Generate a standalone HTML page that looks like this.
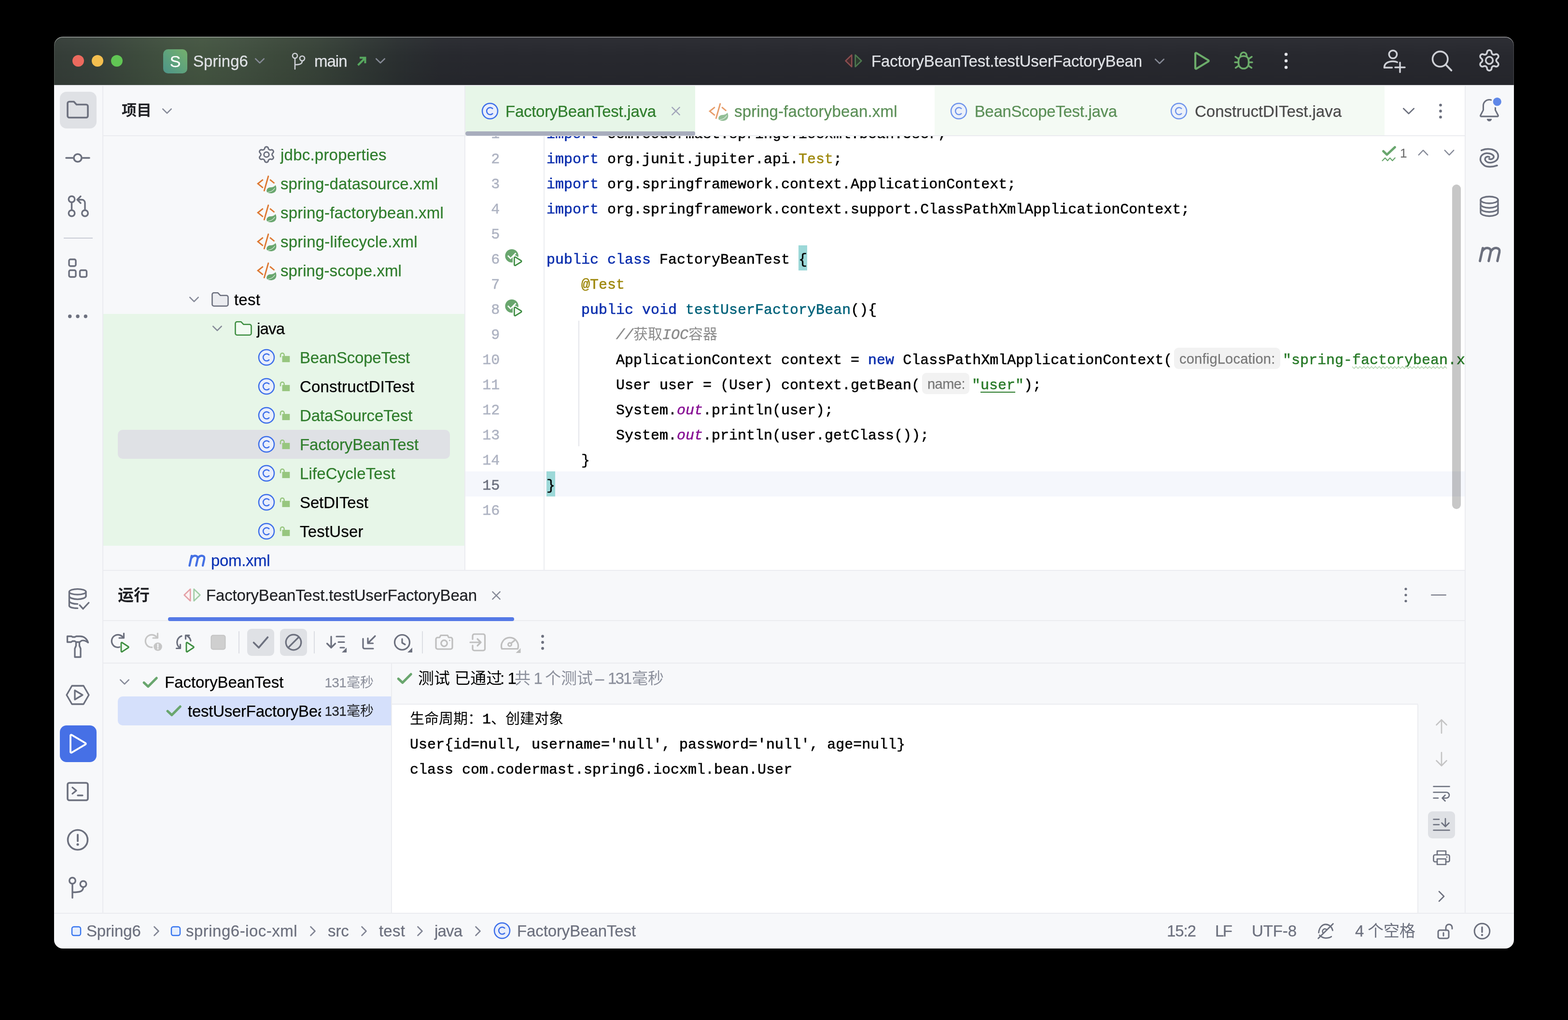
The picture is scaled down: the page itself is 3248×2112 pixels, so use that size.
<!DOCTYPE html>
<html><head><meta charset="utf-8"><title>IDE</title>
<style>
html,body{margin:0;padding:0;background:#000;}
body{width:3248px;height:2112px;position:relative;overflow:hidden;font-family:"Liberation Sans",sans-serif;}
#win{position:absolute;left:0;top:0;width:3248px;height:2112px;clip-path:inset(76px 112px 148px 112px round 18px);background:#F7F8FA;will-change:transform;}
#win div,#win svg{position:absolute;}
#win svg{overflow:visible;}
.t{font-family:"Liberation Sans",sans-serif;white-space:pre;-webkit-text-stroke-width:0.25px;}
.m{font-family:"Liberation Mono",monospace;white-space:pre;-webkit-text-stroke-width:0.55px;}
</style></head><body><div id="win">
<div style="left:112px;top:76px;width:3024px;height:100px;background:#27282E;"></div>
<div style="left:112px;top:76px;width:1000px;height:100px;background:linear-gradient(90deg,#343C37 0%,#37413A 8.4%,#3C4A3C 16.8%,#425240 25.2%,#445541 30.7%,#415040 37.8%,#3C493B 46.2%,#374238 54.6%,#303834 63%,#2A2F30 71.4%,#27292E 79.8%,#27282E 88%,#27282E 100%);"></div>
<div style="left:112px;top:76px;width:3024px;height:100px;background:linear-gradient(180deg,rgba(255,255,255,0.03) 0%,rgba(0,0,0,0) 40%,rgba(0,0,0,0.06) 100%);"></div>
<div style="left:112px;top:76px;width:3024px;height:100px;border-radius:18px 18px 0 0;box-shadow:inset 0 1.6px 0 rgba(255,255,255,0.5), inset 1.2px 0 0 rgba(255,255,255,0.14), inset -1.2px 0 0 rgba(255,255,255,0.14);"></div>
<div style="left:150px;top:114px;width:24px;height:24px;border-radius:12px;background:#EC6A5E;"></div>
<div style="left:190px;top:114px;width:24px;height:24px;border-radius:12px;background:#F4BF4F;"></div>
<div style="left:230px;top:114px;width:24px;height:24px;border-radius:12px;background:#61C554;"></div>
<div style="left:338px;top:102px;width:50px;height:50px;border-radius:10px;background:linear-gradient(45deg,#4E9489 0%,#5FA37C 50%,#76B06C 100%);"></div>
<div class="t" style="left:338px;top:97.0px;height:60px;line-height:60px;font-size:34px;color:#FFFFFF;width:50px;text-align:center;">S</div>
<div class="t" style="left:400px;top:97.0px;height:60px;line-height:60px;font-size:33px;color:#DFE1E5;letter-spacing:0.036px;">Spring6</div>
<svg style="left:506px;top:94px" width="64" height="64" viewBox="-32 -32 64 64" fill="none" stroke-linecap="round" stroke-linejoin="round"><path d="M-8.75 -4.25 L0 4.25 L8.75 -4.25" stroke="#868A96" stroke-width="2.6"/></svg>
<div class="t" style="left:651px;top:97.0px;height:60px;line-height:60px;font-size:33px;color:#DFE1E5;letter-spacing:-1.007px;">main</div>
<svg style="left:756px;top:94px" width="64" height="64" viewBox="-32 -32 64 64" fill="none" stroke-linecap="round" stroke-linejoin="round"><path d="M-8.75 -4.25 L0 4.25 L8.75 -4.25" stroke="#868A96" stroke-width="2.6"/></svg>
<div class="t" style="left:1805px;top:97.0px;height:60px;line-height:60px;font-size:33px;color:#DFE1E5;letter-spacing:-0.164px;">FactoryBeanTest.testUserFactoryBean</div>
<svg style="left:2370px;top:95px" width="64" height="64" viewBox="-32 -32 64 64" fill="none" stroke-linecap="round" stroke-linejoin="round"><path d="M-8.75 -4.25 L0 4.25 L8.75 -4.25" stroke="#868A96" stroke-width="2.6"/></svg>
<div style="left:112px;top:176px;width:100px;height:1714px;background:#F7F8FA;"></div>
<div style="left:212px;top:178px;width:2px;height:1712px;background:#EBECF0;"></div>
<div style="left:112px;top:176px;width:3024px;height:2px;background:#EBECF0;"></div>
<div style="left:3036px;top:178px;width:100px;height:1712px;background:#F7F8FA;"></div>
<div style="left:3034px;top:178px;width:2px;height:1712px;background:#EBECF0;"></div>
<div style="left:214px;top:178px;width:748px;height:1002px;background:#F7F8FA;"></div>
<div style="left:214px;top:280px;width:748px;height:2px;background:#EBECF0;"></div>
<div style="left:962px;top:178px;width:2px;height:1002px;background:#EBECF0;"></div>
<div style="left:214px;top:650px;width:748px;height:480px;background:#E7F6E8;"></div>
<div style="left:244px;top:890px;width:688px;height:60px;background:#DFE1E5;border-radius:10px;"></div>
<div style="left:964px;top:178px;width:2070px;height:1002px;background:#FFFFFF;"></div>
<div style="left:964px;top:178px;width:476px;height:102px;background:#E7F6E8;"></div>
<div style="left:1936px;top:178px;width:932px;height:102px;background:#F4FAF4;"></div>
<div style="left:964px;top:280px;width:2070px;height:2px;background:#EBECF0;"></div>
<div style="left:966px;top:272px;width:474px;height:9px;background:#A8ADBD;border-radius:4px;"></div>
<div style="left:214px;top:1180px;width:2820px;height:2px;background:#EBECF0;"></div>
<div style="left:214px;top:1182px;width:2820px;height:708px;background:#F7F8FA;"></div>
<div style="left:214px;top:1284px;width:2820px;height:2px;background:#EBECF0;"></div>
<div style="left:348px;top:1278px;width:717px;height:8px;background:#5579E6;border-radius:4px;"></div>
<div style="left:214px;top:1372px;width:2820px;height:2px;background:#EBECF0;"></div>
<div style="left:812px;top:1459px;width:2125px;height:431px;background:#FFFFFF;"></div>
<div style="left:812px;top:1457px;width:2125px;height:2px;background:#EBECF0;"></div>
<div style="left:810px;top:1374px;width:2px;height:516px;background:#EBECF0;"></div>
<div style="left:2936px;top:1459px;width:2px;height:431px;background:#EBECF0;"></div>
<div style="left:244px;top:1442px;width:566px;height:60px;background:#D5E0FB;border-radius:10px 0 0 10px;"></div>
<div style="left:112px;top:1890px;width:3024px;height:74px;background:#F7F8FA;"></div>
<div style="left:112px;top:1890px;width:3024px;height:2px;background:#EBECF0;"></div>
<div style="left:124px;top:190px;width:76px;height:76px;background:#DFE1E5;border-radius:14px;"></div>
<div style="left:124px;top:1502px;width:76px;height:76px;background:#4670E6;border-radius:14px;"></div>
<svg style="left:313.7px;top:197.8px" width="64" height="64" viewBox="-32 -32 64 64" fill="none" stroke-linecap="round" stroke-linejoin="round"><path d="M-8.75 -4.35 L0 4.35 L8.75 -4.35" stroke="#868A98" stroke-width="2.6"/></svg>
<svg style="left:520px;top:288px" width="64" height="64" viewBox="-32 -32 64 64" fill="none" stroke-linecap="round" stroke-linejoin="round"><path d="M11.6 0.0 L11.6 0.6 L11.8 1.2 L12.1 1.9 L12.5 2.6 L13.4 3.6 L14.2 4.6 L14.5 5.5 L14.5 6.4 L14.3 7.3 L13.9 8.0 L13.4 8.7 L12.8 9.3 L12.0 9.7 L11.1 10.0 L9.8 9.8 L8.5 9.5 L7.7 9.5 L7.0 9.6 L6.3 9.8 L5.8 10.0 L5.3 10.4 L4.8 10.8 L4.4 11.4 L3.9 12.1 L3.6 13.4 L3.1 14.6 L2.4 15.3 L1.7 15.7 L0.8 16.0 L0.0 16.1 L-0.8 16.0 L-1.7 15.7 L-2.4 15.3 L-3.1 14.6 L-3.6 13.4 L-3.9 12.1 L-4.4 11.4 L-4.8 10.8 L-5.3 10.4 L-5.8 10.0 L-6.3 9.8 L-7.0 9.6 L-7.7 9.5 L-8.5 9.5 L-9.8 9.8 L-11.1 10.0 L-12.0 9.7 L-12.8 9.3 L-13.4 8.7 L-13.9 8.0 L-14.3 7.3 L-14.5 6.4 L-14.5 5.5 L-14.2 4.6 L-13.4 3.6 L-12.5 2.6 L-12.1 1.9 L-11.8 1.2 L-11.6 0.6 L-11.6 0.0 L-11.6 -0.6 L-11.8 -1.2 L-12.1 -1.9 L-12.5 -2.6 L-13.4 -3.6 L-14.2 -4.6 L-14.5 -5.5 L-14.5 -6.4 L-14.3 -7.3 L-13.9 -8.0 L-13.4 -8.7 L-12.8 -9.3 L-12.0 -9.7 L-11.1 -10.0 L-9.8 -9.8 L-8.5 -9.5 L-7.7 -9.5 L-7.0 -9.6 L-6.3 -9.8 L-5.8 -10.0 L-5.3 -10.4 L-4.8 -10.8 L-4.4 -11.4 L-3.9 -12.1 L-3.6 -13.4 L-3.1 -14.6 L-2.4 -15.3 L-1.7 -15.7 L-0.8 -16.0 L-0.0 -16.1 L0.8 -16.0 L1.7 -15.7 L2.4 -15.3 L3.1 -14.6 L3.6 -13.4 L3.9 -12.1 L4.4 -11.4 L4.8 -10.8 L5.3 -10.4 L5.8 -10.0 L6.3 -9.8 L7.0 -9.6 L7.7 -9.5 L8.5 -9.5 L9.8 -9.8 L11.1 -10.0 L12.0 -9.7 L12.8 -9.3 L13.4 -8.7 L13.9 -8.0 L14.3 -7.3 L14.5 -6.4 L14.5 -5.5 L14.2 -4.6 L13.4 -3.6 L12.5 -2.6 L12.1 -1.9 L11.8 -1.2 L11.6 -0.6 Z" stroke="#6C707E" stroke-width="2.9" stroke-linejoin="round"/><circle cx="0" cy="0" r="5.3" stroke="#6C707E" stroke-width="2.9"/></svg>
<div class="t" style="left:581px;top:290.5px;height:60px;line-height:60px;font-size:33px;color:#2F7D2C;letter-spacing:0.223px;">jdbc.properties</div>
<svg style="left:520px;top:348px" width="64" height="64" viewBox="-32 -32 64 64" fill="none" stroke-linecap="round" stroke-linejoin="round"><g opacity="1"><path d="M-7.2 -8.2 L-17.8 0.3 L-7.2 8.8" stroke="#DE7832" stroke-width="2.9" stroke-linecap="butt" stroke-linejoin="miter"/><path d="M3.8 -15 L-4.7 14.8" stroke="#DE7832" stroke-width="2.9"/><path d="M7.1 -8.2 L16.4 -0.5" stroke="#DE7832" stroke-width="2.9" stroke-linecap="butt"/><path d="M18.8 3.2 C21.5 9 21 15.5 16 18.5 C11 21.5 3.5 20.5 0.8 17.5 C-1 13 2 8.5 8 8 C13 7.8 16.5 6.5 18.8 3.2 Z" fill="#69A66E" stroke="none"/><path d="M2.5 18.3 C9 17.2 15 13.5 17.2 9.5" stroke="#E9F3EA" stroke-width="1.1"/></g></svg>
<div class="t" style="left:581px;top:350.5px;height:60px;line-height:60px;font-size:33px;color:#2F7D2C;letter-spacing:0.089px;">spring-datasource.xml</div>
<svg style="left:520px;top:408px" width="64" height="64" viewBox="-32 -32 64 64" fill="none" stroke-linecap="round" stroke-linejoin="round"><g opacity="1"><path d="M-7.2 -8.2 L-17.8 0.3 L-7.2 8.8" stroke="#DE7832" stroke-width="2.9" stroke-linecap="butt" stroke-linejoin="miter"/><path d="M3.8 -15 L-4.7 14.8" stroke="#DE7832" stroke-width="2.9"/><path d="M7.1 -8.2 L16.4 -0.5" stroke="#DE7832" stroke-width="2.9" stroke-linecap="butt"/><path d="M18.8 3.2 C21.5 9 21 15.5 16 18.5 C11 21.5 3.5 20.5 0.8 17.5 C-1 13 2 8.5 8 8 C13 7.8 16.5 6.5 18.8 3.2 Z" fill="#69A66E" stroke="none"/><path d="M2.5 18.3 C9 17.2 15 13.5 17.2 9.5" stroke="#E9F3EA" stroke-width="1.1"/></g></svg>
<div class="t" style="left:581px;top:410.5px;height:60px;line-height:60px;font-size:33px;color:#2F7D2C;letter-spacing:0.191px;">spring-factorybean.xml</div>
<svg style="left:520px;top:468px" width="64" height="64" viewBox="-32 -32 64 64" fill="none" stroke-linecap="round" stroke-linejoin="round"><g opacity="1"><path d="M-7.2 -8.2 L-17.8 0.3 L-7.2 8.8" stroke="#DE7832" stroke-width="2.9" stroke-linecap="butt" stroke-linejoin="miter"/><path d="M3.8 -15 L-4.7 14.8" stroke="#DE7832" stroke-width="2.9"/><path d="M7.1 -8.2 L16.4 -0.5" stroke="#DE7832" stroke-width="2.9" stroke-linecap="butt"/><path d="M18.8 3.2 C21.5 9 21 15.5 16 18.5 C11 21.5 3.5 20.5 0.8 17.5 C-1 13 2 8.5 8 8 C13 7.8 16.5 6.5 18.8 3.2 Z" fill="#69A66E" stroke="none"/><path d="M2.5 18.3 C9 17.2 15 13.5 17.2 9.5" stroke="#E9F3EA" stroke-width="1.1"/></g></svg>
<div class="t" style="left:581px;top:470.5px;height:60px;line-height:60px;font-size:33px;color:#2F7D2C;letter-spacing:0.249px;">spring-lifecycle.xml</div>
<svg style="left:520px;top:528px" width="64" height="64" viewBox="-32 -32 64 64" fill="none" stroke-linecap="round" stroke-linejoin="round"><g opacity="1"><path d="M-7.2 -8.2 L-17.8 0.3 L-7.2 8.8" stroke="#DE7832" stroke-width="2.9" stroke-linecap="butt" stroke-linejoin="miter"/><path d="M3.8 -15 L-4.7 14.8" stroke="#DE7832" stroke-width="2.9"/><path d="M7.1 -8.2 L16.4 -0.5" stroke="#DE7832" stroke-width="2.9" stroke-linecap="butt"/><path d="M18.8 3.2 C21.5 9 21 15.5 16 18.5 C11 21.5 3.5 20.5 0.8 17.5 C-1 13 2 8.5 8 8 C13 7.8 16.5 6.5 18.8 3.2 Z" fill="#69A66E" stroke="none"/><path d="M2.5 18.3 C9 17.2 15 13.5 17.2 9.5" stroke="#E9F3EA" stroke-width="1.1"/></g></svg>
<div class="t" style="left:581px;top:530.5px;height:60px;line-height:60px;font-size:33px;color:#2F7D2C;letter-spacing:0.099px;">spring-scope.xml</div>
<svg style="left:370px;top:587.8px" width="64" height="64" viewBox="-32 -32 64 64" fill="none" stroke-linecap="round" stroke-linejoin="round"><path d="M-8.75 -4.35 L0 4.35 L8.75 -4.35" stroke="#868A98" stroke-width="2.6"/></svg>
<svg style="left:423.5px;top:587.6px" width="64" height="64" viewBox="-32 -32 64 64" fill="none" stroke-linecap="round" stroke-linejoin="round"><path d="M-16.5 -10.2 A3.5 3.5 0 0 1 -13.0 -13.7 H-4.620000000000001 L0.6600000000000001 -8.219999999999999 H13.0 A3.5 3.5 0 0 1 16.5 -4.719999999999999 V10.2 A3.5 3.5 0 0 1 13.0 13.7 H-13.0 A3.5 3.5 0 0 1 -16.5 10.2 Z" stroke="#6C707E" stroke-width="2.6" fill="#EBECF0"/></svg>
<div class="t" style="left:485px;top:591.0px;height:60px;line-height:60px;font-size:33px;color:#000;letter-spacing:0.203px;">test</div>
<svg style="left:418px;top:648px" width="64" height="64" viewBox="-32 -32 64 64" fill="none" stroke-linecap="round" stroke-linejoin="round"><path d="M-8.75 -4.35 L0 4.35 L8.75 -4.35" stroke="#868A98" stroke-width="2.6"/></svg>
<svg style="left:471.5px;top:647.6px" width="64" height="64" viewBox="-32 -32 64 64" fill="none" stroke-linecap="round" stroke-linejoin="round"><path d="M-16.5 -10.2 A3.5 3.5 0 0 1 -13.0 -13.7 H-4.620000000000001 L0.6600000000000001 -8.219999999999999 H13.0 A3.5 3.5 0 0 1 16.5 -4.719999999999999 V10.2 A3.5 3.5 0 0 1 13.0 13.7 H-13.0 A3.5 3.5 0 0 1 -16.5 10.2 Z" stroke="#3E8E41" stroke-width="2.6" fill="#F2FBF2"/></svg>
<div class="t" style="left:532px;top:651.0px;height:60px;line-height:60px;font-size:33px;color:#000;letter-spacing:-0.784px;">java</div>
<svg style="left:520px;top:708px" width="64" height="64" viewBox="-32 -32 64 64" fill="none" stroke-linecap="round" stroke-linejoin="round"><g opacity="1"><circle cx="0" cy="0" r="16.0" fill="#E9EEFB" stroke="#3C6EEA" stroke-width="2.5"/><path d="M6 -4.4 A7.2 7.2 0 1 0 6 4.4" stroke="#3C6EEA" stroke-width="2.5" fill="none" stroke-linecap="butt"/></g></svg>
<svg style="left:556.5px;top:708px" width="64" height="64" viewBox="-32 -32 64 64" fill="none" stroke-linecap="round" stroke-linejoin="round"><rect x="-4.5" y="-2.9" width="15.8" height="12.8" fill="#97C67F"/><path d="M-8 -0.2 V-4.9 A3.8 3.8 0 0 1 -0.4 -4.9 V-2" stroke="#97C67F" stroke-width="2.5" fill="none" stroke-linecap="butt"/></svg>
<div class="t" style="left:621px;top:711.0px;height:60px;line-height:60px;font-size:33px;color:#2F7D2C;letter-spacing:-0.243px;">BeanScopeTest</div>
<svg style="left:520px;top:768px" width="64" height="64" viewBox="-32 -32 64 64" fill="none" stroke-linecap="round" stroke-linejoin="round"><g opacity="1"><circle cx="0" cy="0" r="16.0" fill="#E9EEFB" stroke="#3C6EEA" stroke-width="2.5"/><path d="M6 -4.4 A7.2 7.2 0 1 0 6 4.4" stroke="#3C6EEA" stroke-width="2.5" fill="none" stroke-linecap="butt"/></g></svg>
<svg style="left:556.5px;top:768px" width="64" height="64" viewBox="-32 -32 64 64" fill="none" stroke-linecap="round" stroke-linejoin="round"><rect x="-4.5" y="-2.9" width="15.8" height="12.8" fill="#97C67F"/><path d="M-8 -0.2 V-4.9 A3.8 3.8 0 0 1 -0.4 -4.9 V-2" stroke="#97C67F" stroke-width="2.5" fill="none" stroke-linecap="butt"/></svg>
<div class="t" style="left:621px;top:771.0px;height:60px;line-height:60px;font-size:33px;color:#000;letter-spacing:0.171px;">ConstructDITest</div>
<svg style="left:520px;top:828px" width="64" height="64" viewBox="-32 -32 64 64" fill="none" stroke-linecap="round" stroke-linejoin="round"><g opacity="1"><circle cx="0" cy="0" r="16.0" fill="#E9EEFB" stroke="#3C6EEA" stroke-width="2.5"/><path d="M6 -4.4 A7.2 7.2 0 1 0 6 4.4" stroke="#3C6EEA" stroke-width="2.5" fill="none" stroke-linecap="butt"/></g></svg>
<svg style="left:556.5px;top:828px" width="64" height="64" viewBox="-32 -32 64 64" fill="none" stroke-linecap="round" stroke-linejoin="round"><rect x="-4.5" y="-2.9" width="15.8" height="12.8" fill="#97C67F"/><path d="M-8 -0.2 V-4.9 A3.8 3.8 0 0 1 -0.4 -4.9 V-2" stroke="#97C67F" stroke-width="2.5" fill="none" stroke-linecap="butt"/></svg>
<div class="t" style="left:621px;top:831.0px;height:60px;line-height:60px;font-size:33px;color:#2F7D2C;letter-spacing:-0.106px;">DataSourceTest</div>
<svg style="left:520px;top:888px" width="64" height="64" viewBox="-32 -32 64 64" fill="none" stroke-linecap="round" stroke-linejoin="round"><g opacity="1"><circle cx="0" cy="0" r="16.0" fill="#E9EEFB" stroke="#3C6EEA" stroke-width="2.5"/><path d="M6 -4.4 A7.2 7.2 0 1 0 6 4.4" stroke="#3C6EEA" stroke-width="2.5" fill="none" stroke-linecap="butt"/></g></svg>
<svg style="left:556.5px;top:888px" width="64" height="64" viewBox="-32 -32 64 64" fill="none" stroke-linecap="round" stroke-linejoin="round"><rect x="-4.5" y="-2.9" width="15.8" height="12.8" fill="#97C67F"/><path d="M-8 -0.2 V-4.9 A3.8 3.8 0 0 1 -0.4 -4.9 V-2" stroke="#97C67F" stroke-width="2.5" fill="none" stroke-linecap="butt"/></svg>
<div class="t" style="left:621px;top:891.0px;height:60px;line-height:60px;font-size:33px;color:#2F7D2C;letter-spacing:-0.108px;">FactoryBeanTest</div>
<svg style="left:520px;top:948px" width="64" height="64" viewBox="-32 -32 64 64" fill="none" stroke-linecap="round" stroke-linejoin="round"><g opacity="1"><circle cx="0" cy="0" r="16.0" fill="#E9EEFB" stroke="#3C6EEA" stroke-width="2.5"/><path d="M6 -4.4 A7.2 7.2 0 1 0 6 4.4" stroke="#3C6EEA" stroke-width="2.5" fill="none" stroke-linecap="butt"/></g></svg>
<svg style="left:556.5px;top:948px" width="64" height="64" viewBox="-32 -32 64 64" fill="none" stroke-linecap="round" stroke-linejoin="round"><rect x="-4.5" y="-2.9" width="15.8" height="12.8" fill="#97C67F"/><path d="M-8 -0.2 V-4.9 A3.8 3.8 0 0 1 -0.4 -4.9 V-2" stroke="#97C67F" stroke-width="2.5" fill="none" stroke-linecap="butt"/></svg>
<div class="t" style="left:621px;top:951.0px;height:60px;line-height:60px;font-size:33px;color:#2F7D2C;letter-spacing:0.112px;">LifeCycleTest</div>
<svg style="left:520px;top:1008px" width="64" height="64" viewBox="-32 -32 64 64" fill="none" stroke-linecap="round" stroke-linejoin="round"><g opacity="1"><circle cx="0" cy="0" r="16.0" fill="#E9EEFB" stroke="#3C6EEA" stroke-width="2.5"/><path d="M6 -4.4 A7.2 7.2 0 1 0 6 4.4" stroke="#3C6EEA" stroke-width="2.5" fill="none" stroke-linecap="butt"/></g></svg>
<svg style="left:556.5px;top:1008px" width="64" height="64" viewBox="-32 -32 64 64" fill="none" stroke-linecap="round" stroke-linejoin="round"><rect x="-4.5" y="-2.9" width="15.8" height="12.8" fill="#97C67F"/><path d="M-8 -0.2 V-4.9 A3.8 3.8 0 0 1 -0.4 -4.9 V-2" stroke="#97C67F" stroke-width="2.5" fill="none" stroke-linecap="butt"/></svg>
<div class="t" style="left:621px;top:1011.0px;height:60px;line-height:60px;font-size:33px;color:#000;letter-spacing:-0.128px;">SetDITest</div>
<svg style="left:520px;top:1068px" width="64" height="64" viewBox="-32 -32 64 64" fill="none" stroke-linecap="round" stroke-linejoin="round"><g opacity="1"><circle cx="0" cy="0" r="16.0" fill="#E9EEFB" stroke="#3C6EEA" stroke-width="2.5"/><path d="M6 -4.4 A7.2 7.2 0 1 0 6 4.4" stroke="#3C6EEA" stroke-width="2.5" fill="none" stroke-linecap="butt"/></g></svg>
<svg style="left:556.5px;top:1068px" width="64" height="64" viewBox="-32 -32 64 64" fill="none" stroke-linecap="round" stroke-linejoin="round"><rect x="-4.5" y="-2.9" width="15.8" height="12.8" fill="#97C67F"/><path d="M-8 -0.2 V-4.9 A3.8 3.8 0 0 1 -0.4 -4.9 V-2" stroke="#97C67F" stroke-width="2.5" fill="none" stroke-linecap="butt"/></svg>
<div class="t" style="left:621px;top:1071.0px;height:60px;line-height:60px;font-size:33px;color:#000;letter-spacing:0.201px;">TestUser</div>
<svg style="left:375.5px;top:1128.5px" width="64" height="64" viewBox="-32 -32 64 64" fill="none" stroke-linecap="round" stroke-linejoin="round"><g transform="scale(0.76)"><path d="M-20.4 13.4 L-14.5 -13.2 M-15.9 -6.5 C-12.5 -12 -7.5 -14 -3.5 -13.3 C0.8 -12.5 2.8 -9.5 1.8 -5 L-2.3 13.4 M2.2 -6.5 C5.6 -12 10.6 -14 14.6 -13.3 C18.9 -12.5 20.9 -9.5 19.9 -5 L15.8 13.4" stroke="#4470E4" stroke-width="5.66" fill="none"/></g></svg>
<div class="t" style="left:437px;top:1131.0px;height:60px;line-height:60px;font-size:33px;color:#0A32B4;letter-spacing:-0.355px;">pom.xml</div>
<svg style="left:982.5px;top:197.9px" width="64" height="64" viewBox="-32 -32 64 64" fill="none" stroke-linecap="round" stroke-linejoin="round"><g opacity="1"><circle cx="0" cy="0" r="16.0" fill="#E9EEFB" stroke="#3C6EEA" stroke-width="2.5"/><path d="M6 -4.4 A7.2 7.2 0 1 0 6 4.4" stroke="#3C6EEA" stroke-width="2.5" fill="none" stroke-linecap="butt"/></g></svg>
<div class="t" style="left:1047px;top:200.7px;height:60px;line-height:60px;font-size:33px;color:#2F7D2C;letter-spacing:-0.276px;">FactoryBeanTest.java</div>
<svg style="left:1368px;top:198px" width="64" height="64" viewBox="-32 -32 64 64" fill="none" stroke-linecap="round" stroke-linejoin="round"><path d="M-7.7 -7.7 L7.7 7.7 M7.7 -7.7 L-7.7 7.7" stroke="#A3A6BA" stroke-width="2.4"/></svg>
<svg style="left:1456.2px;top:198.2px" width="64" height="64" viewBox="-32 -32 64 64" fill="none" stroke-linecap="round" stroke-linejoin="round"><g opacity="0.72"><path d="M-7.2 -8.2 L-17.8 0.3 L-7.2 8.8" stroke="#DE7832" stroke-width="2.9" stroke-linecap="butt" stroke-linejoin="miter"/><path d="M3.8 -15 L-4.7 14.8" stroke="#DE7832" stroke-width="2.9"/><path d="M7.1 -8.2 L16.4 -0.5" stroke="#DE7832" stroke-width="2.9" stroke-linecap="butt"/><path d="M18.8 3.2 C21.5 9 21 15.5 16 18.5 C11 21.5 3.5 20.5 0.8 17.5 C-1 13 2 8.5 8 8 C13 7.8 16.5 6.5 18.8 3.2 Z" fill="#69A66E" stroke="none"/><path d="M2.5 18.3 C9 17.2 15 13.5 17.2 9.5" stroke="#E9F3EA" stroke-width="1.1"/></g></svg>
<div class="t" style="left:1521px;top:200.7px;height:60px;line-height:60px;font-size:33px;color:#5B8F57;letter-spacing:0.177px;">spring-factorybean.xml</div>
<svg style="left:1953.7px;top:197.9px" width="64" height="64" viewBox="-32 -32 64 64" fill="none" stroke-linecap="round" stroke-linejoin="round"><g opacity="0.72"><circle cx="0" cy="0" r="16.0" fill="#E9EEFB" stroke="#3C6EEA" stroke-width="2.5"/><path d="M6 -4.4 A7.2 7.2 0 1 0 6 4.4" stroke="#3C6EEA" stroke-width="2.5" fill="none" stroke-linecap="butt"/></g></svg>
<div class="t" style="left:2018.7px;top:200.7px;height:60px;line-height:60px;font-size:33px;color:#5B8F57;letter-spacing:-0.326px;">BeanScopeTest.java</div>
<svg style="left:2409.8px;top:197.9px" width="64" height="64" viewBox="-32 -32 64 64" fill="none" stroke-linecap="round" stroke-linejoin="round"><g opacity="0.72"><circle cx="0" cy="0" r="16.0" fill="#E9EEFB" stroke="#3C6EEA" stroke-width="2.5"/><path d="M6 -4.4 A7.2 7.2 0 1 0 6 4.4" stroke="#3C6EEA" stroke-width="2.5" fill="none" stroke-linecap="butt"/></g></svg>
<div class="t" style="left:2475px;top:200.7px;height:60px;line-height:60px;font-size:33px;color:#4A4A4A;letter-spacing:-0.022px;">ConstructDITest.java</div>
<svg style="left:2886.3px;top:197.9px" width="64" height="64" viewBox="-32 -32 64 64" fill="none" stroke-linecap="round" stroke-linejoin="round"><path d="M-10.75 -5.3 L0 5.3 L10.75 -5.3" stroke="#6C707E" stroke-width="2.6"/></svg>
<svg style="left:2952px;top:198px" width="64" height="64" viewBox="-32 -32 64 64" fill="none" stroke-linecap="round" stroke-linejoin="round"><circle cx="0" cy="-12.4" r="2.9" fill="#6C707E"/><circle cx="0" cy="0" r="2.9" fill="#6C707E"/><circle cx="0" cy="12.4" r="2.9" fill="#6C707E"/></svg>
<div style="left:964px;top:976px;width:2070px;height:52px;background:#F5F7FC;"></div>
<div style="left:1126px;top:282px;width:2px;height:898px;background:#EBECF0;"></div>
<div style="left:1654px;top:508px;width:18px;height:52px;background:#9CD8D8;"></div>
<div style="left:1132px;top:976px;width:18px;height:52px;background:#9CD8D8;"></div>
<div style="left:1198px;top:664px;width:2px;height:260px;background:#E4E5EA;"></div>
<div class="m" style="left:1132px;top:252px;height:52px;line-height:52px;font-size:30px;color:#000;"><span style="color:#0A2EAD;">import</span><span style="color:#000;"> com.codermast.spring6.iocxml.bean.User;</span></div>
<div class="m" style="left:1132px;top:304px;height:52px;line-height:52px;font-size:30px;color:#000;"><span style="color:#0A2EAD;">import</span><span style="color:#000;"> org.junit.jupiter.api.</span><span style="color:#9E880D;">Test</span><span style="color:#000;">;</span></div>
<div class="m" style="left:1132px;top:356px;height:52px;line-height:52px;font-size:30px;color:#000;"><span style="color:#0A2EAD;">import</span><span style="color:#000;"> org.springframework.context.ApplicationContext;</span></div>
<div class="m" style="left:1132px;top:408px;height:52px;line-height:52px;font-size:30px;color:#000;"><span style="color:#0A2EAD;">import</span><span style="color:#000;"> org.springframework.context.support.ClassPathXmlApplicationContext;</span></div>
<div class="m" style="left:1132px;top:512px;height:52px;line-height:52px;font-size:30px;color:#000;"><span style="color:#0A2EAD;">public class</span><span style="color:#000;"> FactoryBeanTest {</span></div>
<div class="m" style="left:1132px;top:564px;height:52px;line-height:52px;font-size:30px;color:#000;"><span style="color:#000;">    </span><span style="color:#9E880D;">@Test</span></div>
<div class="m" style="left:1132px;top:616px;height:52px;line-height:52px;font-size:30px;color:#000;"><span style="color:#000;">    </span><span style="color:#0A2EAD;">public void</span><span style="color:#000;"> </span><span style="color:#00627A;">testUserFactoryBean</span><span style="color:#000;">(){</span></div>
<div class="m" style="left:1132px;top:668px;height:52px;line-height:52px;font-size:30px;color:#000;"><span style="color:#000;">        </span><span style="color:#8C8C8C;font-style:italic;">//</span></div>
<div class="m" style="left:1132px;top:720px;height:52px;line-height:52px;font-size:30px;color:#000;"><span style="color:#000;">        ApplicationContext context = </span><span style="color:#0A2EAD;">new</span><span style="color:#000;"> ClassPathXmlApplicationContext(</span></div>
<div class="m" style="left:1132px;top:772px;height:52px;line-height:52px;font-size:30px;color:#000;"><span style="color:#000;">        User user = (User) context.getBean(</span></div>
<div class="m" style="left:1132px;top:824px;height:52px;line-height:52px;font-size:30px;color:#000;"><span style="color:#000;">        System.</span><span style="color:#871094;font-style:italic;">out</span><span style="color:#000;">.println(user);</span></div>
<div class="m" style="left:1132px;top:876px;height:52px;line-height:52px;font-size:30px;color:#000;"><span style="color:#000;">        System.</span><span style="color:#871094;font-style:italic;">out</span><span style="color:#000;">.println(user.getClass());</span></div>
<div class="m" style="left:1132px;top:928px;height:52px;line-height:52px;font-size:30px;color:#000;"><span style="color:#000;">    }</span></div>
<div class="m" style="left:1132px;top:980px;height:52px;line-height:52px;font-size:30px;color:#000;"><span style="color:#000;">}</span></div>
<div class="m" style="left:1312px;top:668px;height:52px;line-height:52px;font-size:30px;color:#8C8C8C;font-family:'Liberation Mono','Noto Sans CJK SC',monospace;-webkit-text-stroke-width:0;">获取</div>
<div class="m" style="left:1372px;top:668px;height:52px;line-height:52px;font-size:30px;color:#8C8C8C;font-style:italic;">IOC</div>
<div class="m" style="left:1426px;top:668px;height:52px;line-height:52px;font-size:30px;color:#8C8C8C;font-family:'Liberation Mono','Noto Sans CJK SC',monospace;-webkit-text-stroke-width:0;">容器</div>
<div style="left:2432px;top:720px;width:220px;height:44px;background:#F2F2F2;border-radius:9px;"></div>
<div class="t" style="left:2443px;top:712.5px;height:60px;line-height:60px;font-size:29px;color:#787878;letter-spacing:0.228px;">configLocation:</div>
<div style="left:1910px;top:772px;width:98px;height:44px;background:#F2F2F2;border-radius:9px;"></div>
<div class="t" style="left:1921px;top:764.5px;height:60px;line-height:60px;font-size:29px;color:#787878;letter-spacing:-0.520px;">name:</div>
<div class="m" style="left:2657px;top:720px;height:52px;line-height:52px;font-size:30px;color:#2A7B2A;width:377px;overflow:hidden;">"spring-factorybean.xml");</div>
<div class="m" style="left:2013px;top:772px;height:52px;line-height:52px;font-size:30px;color:#000;"><span style="color:#2A7B2A">"<span style="text-decoration:underline;text-decoration-thickness:2px;text-underline-offset:5px;">user</span>"</span>);</div>
<svg style="left:0;top:0" width="3034" height="2112"><path d="M2801 759 L2805 763 L2809 759 L2813 763 L2817 759 L2821 763 L2825 759 L2829 763 L2833 759 L2837 763 L2841 759 L2845 763 L2849 759 L2853 763 L2857 759 L2861 763 L2865 759 L2869 763 L2873 759 L2877 763 L2881 759 L2885 763 L2889 759 L2893 763 L2897 759 L2901 763 L2905 759 L2909 763 L2913 759 L2917 763 L2921 759 L2925 763 L2929 759 L2933 763 L2937 759 L2941 763 L2945 759 L2949 763 L2953 759 L2957 763 L2961 759 L2965 763 L2969 759 L2973 763 L2977 759 L2981 763 L2985 759 L2989 763 L2993 759 L2997 763" stroke="#B4D6B0" stroke-width="1.6" fill="none"/></svg>
<div class="m" style="left:964px;width:71.3px;text-align:right;top:252px;height:52px;line-height:52px;font-size:30px;color:#AEB3C2;">1</div>
<div class="m" style="left:964px;width:71.3px;text-align:right;top:304px;height:52px;line-height:52px;font-size:30px;color:#AEB3C2;">2</div>
<div class="m" style="left:964px;width:71.3px;text-align:right;top:356px;height:52px;line-height:52px;font-size:30px;color:#AEB3C2;">3</div>
<div class="m" style="left:964px;width:71.3px;text-align:right;top:408px;height:52px;line-height:52px;font-size:30px;color:#AEB3C2;">4</div>
<div class="m" style="left:964px;width:71.3px;text-align:right;top:460px;height:52px;line-height:52px;font-size:30px;color:#AEB3C2;">5</div>
<div class="m" style="left:964px;width:71.3px;text-align:right;top:512px;height:52px;line-height:52px;font-size:30px;color:#AEB3C2;">6</div>
<div class="m" style="left:964px;width:71.3px;text-align:right;top:564px;height:52px;line-height:52px;font-size:30px;color:#AEB3C2;">7</div>
<div class="m" style="left:964px;width:71.3px;text-align:right;top:616px;height:52px;line-height:52px;font-size:30px;color:#AEB3C2;">8</div>
<div class="m" style="left:964px;width:71.3px;text-align:right;top:668px;height:52px;line-height:52px;font-size:30px;color:#AEB3C2;">9</div>
<div class="m" style="left:964px;width:71.3px;text-align:right;top:720px;height:52px;line-height:52px;font-size:30px;color:#AEB3C2;">10</div>
<div class="m" style="left:964px;width:71.3px;text-align:right;top:772px;height:52px;line-height:52px;font-size:30px;color:#AEB3C2;">11</div>
<div class="m" style="left:964px;width:71.3px;text-align:right;top:824px;height:52px;line-height:52px;font-size:30px;color:#AEB3C2;">12</div>
<div class="m" style="left:964px;width:71.3px;text-align:right;top:876px;height:52px;line-height:52px;font-size:30px;color:#AEB3C2;">13</div>
<div class="m" style="left:964px;width:71.3px;text-align:right;top:928px;height:52px;line-height:52px;font-size:30px;color:#AEB3C2;">14</div>
<div class="m" style="left:964px;width:71.3px;text-align:right;top:980px;height:52px;line-height:52px;font-size:30px;color:#6C707E;">15</div>
<div class="m" style="left:964px;width:71.3px;text-align:right;top:1032px;height:52px;line-height:52px;font-size:30px;color:#AEB3C2;">16</div>
<div style="left:964px;top:178px;width:476px;height:94px;background:#E7F6E8;"></div>
<div style="left:1440px;top:178px;width:496px;height:102px;background:#FFFFFF;"></div>
<div style="left:1936px;top:178px;width:932px;height:102px;background:#F4FAF4;"></div>
<div style="left:2868px;top:178px;width:166px;height:102px;background:#FFFFFF;"></div>
<div style="left:964px;top:280px;width:2070px;height:2px;background:#EBECF0;"></div>
<div style="left:964px;top:272px;width:476px;height:9px;background:#A8ADBD;border-radius:4.5px;"></div>
<svg style="left:982.5px;top:197.9px" width="64" height="64" viewBox="-32 -32 64 64" fill="none" stroke-linecap="round" stroke-linejoin="round"><g opacity="1"><circle cx="0" cy="0" r="16.0" fill="#E9EEFB" stroke="#3C6EEA" stroke-width="2.5"/><path d="M6 -4.4 A7.2 7.2 0 1 0 6 4.4" stroke="#3C6EEA" stroke-width="2.5" fill="none" stroke-linecap="butt"/></g></svg>
<div class="t" style="left:1047px;top:200.7px;height:60px;line-height:60px;font-size:33px;color:#2F7D2C;letter-spacing:-0.276px;">FactoryBeanTest.java</div>
<svg style="left:1368px;top:198px" width="64" height="64" viewBox="-32 -32 64 64" fill="none" stroke-linecap="round" stroke-linejoin="round"><path d="M-7.7 -7.7 L7.7 7.7 M7.7 -7.7 L-7.7 7.7" stroke="#A3A6BA" stroke-width="2.4"/></svg>
<svg style="left:1456.2px;top:198.2px" width="64" height="64" viewBox="-32 -32 64 64" fill="none" stroke-linecap="round" stroke-linejoin="round"><g opacity="0.72"><path d="M-7.2 -8.2 L-17.8 0.3 L-7.2 8.8" stroke="#DE7832" stroke-width="2.9" stroke-linecap="butt" stroke-linejoin="miter"/><path d="M3.8 -15 L-4.7 14.8" stroke="#DE7832" stroke-width="2.9"/><path d="M7.1 -8.2 L16.4 -0.5" stroke="#DE7832" stroke-width="2.9" stroke-linecap="butt"/><path d="M18.8 3.2 C21.5 9 21 15.5 16 18.5 C11 21.5 3.5 20.5 0.8 17.5 C-1 13 2 8.5 8 8 C13 7.8 16.5 6.5 18.8 3.2 Z" fill="#69A66E" stroke="none"/><path d="M2.5 18.3 C9 17.2 15 13.5 17.2 9.5" stroke="#E9F3EA" stroke-width="1.1"/></g></svg>
<div class="t" style="left:1521px;top:200.7px;height:60px;line-height:60px;font-size:33px;color:#5B8F57;letter-spacing:0.177px;">spring-factorybean.xml</div>
<svg style="left:1953.7px;top:197.9px" width="64" height="64" viewBox="-32 -32 64 64" fill="none" stroke-linecap="round" stroke-linejoin="round"><g opacity="0.72"><circle cx="0" cy="0" r="16.0" fill="#E9EEFB" stroke="#3C6EEA" stroke-width="2.5"/><path d="M6 -4.4 A7.2 7.2 0 1 0 6 4.4" stroke="#3C6EEA" stroke-width="2.5" fill="none" stroke-linecap="butt"/></g></svg>
<div class="t" style="left:2018.7px;top:200.7px;height:60px;line-height:60px;font-size:33px;color:#5B8F57;letter-spacing:-0.326px;">BeanScopeTest.java</div>
<svg style="left:2409.8px;top:197.9px" width="64" height="64" viewBox="-32 -32 64 64" fill="none" stroke-linecap="round" stroke-linejoin="round"><g opacity="0.72"><circle cx="0" cy="0" r="16.0" fill="#E9EEFB" stroke="#3C6EEA" stroke-width="2.5"/><path d="M6 -4.4 A7.2 7.2 0 1 0 6 4.4" stroke="#3C6EEA" stroke-width="2.5" fill="none" stroke-linecap="butt"/></g></svg>
<div class="t" style="left:2475px;top:200.7px;height:60px;line-height:60px;font-size:33px;color:#4A4A4A;letter-spacing:-0.022px;">ConstructDITest.java</div>
<svg style="left:2886.3px;top:197.9px" width="64" height="64" viewBox="-32 -32 64 64" fill="none" stroke-linecap="round" stroke-linejoin="round"><path d="M-10.75 -5.3 L0 5.3 L10.75 -5.3" stroke="#6C707E" stroke-width="2.6"/></svg>
<svg style="left:2952px;top:198px" width="64" height="64" viewBox="-32 -32 64 64" fill="none" stroke-linecap="round" stroke-linejoin="round"><circle cx="0" cy="-12.4" r="2.9" fill="#6C707E"/><circle cx="0" cy="0" r="2.9" fill="#6C707E"/><circle cx="0" cy="12.4" r="2.9" fill="#6C707E"/></svg>
<div style="left:3008px;top:382px;width:18px;height:672px;background:rgba(0,0,0,0.22);border-radius:9px;"></div>
<svg style="left:2845px;top:285px" width="64" height="64" viewBox="-32 -32 64 64" fill="none" stroke-linecap="round" stroke-linejoin="round"><path d="M-11.6 -3.9 L-4.1 3.3 L12.5 -12.2" stroke="#69A66E" stroke-width="4.8"/><path d="M-13.5 15.7 L-7.9 10.1 L-2.7 15.7 L2.1 10.1 L7.3 15.7 L12.6 9.9" stroke="#69A66E" stroke-width="2.2" /></svg>
<div class="t" style="left:2900px;top:286.5px;height:60px;line-height:60px;font-size:26px;color:#6E6E6E;">1</div>
<svg style="left:2916px;top:283.8px" width="64" height="64" viewBox="-32 -32 64 64" fill="none" stroke-linecap="round" stroke-linejoin="round"><path d="M-9.35 4.9 L0 -4.9 L9.35 4.9" stroke="#868A98" stroke-width="2.3"/></svg>
<svg style="left:2970px;top:283.8px" width="64" height="64" viewBox="-32 -32 64 64" fill="none" stroke-linecap="round" stroke-linejoin="round"><path d="M-9.35 -4.9 L0 4.9 L9.35 -4.9" stroke="#868A98" stroke-width="2.3"/></svg>
<svg style="left:366.1px;top:1200px" width="64" height="64" viewBox="-32 -32 64 64" fill="none" stroke-linecap="round" stroke-linejoin="round"><path d="M-3.7 -12.2 L-16.4 0 L-3.7 12.2 Z" stroke="#E4A0A6" stroke-width="2.6" fill="#FCF1F2"/><path d="M3.7 -12.2 L16.4 0 L3.7 12.2 Z" stroke="#A0CDA5" stroke-width="2.6" fill="#F1F8F1"/></svg>
<div class="t" style="left:427px;top:1203.0px;height:60px;line-height:60px;font-size:33px;color:#1F2024;letter-spacing:-0.164px;">FactoryBeanTest.testUserFactoryBean</div>
<svg style="left:996px;top:1201px" width="64" height="64" viewBox="-32 -32 64 64" fill="none" stroke-linecap="round" stroke-linejoin="round"><path d="M-7.7 -7.7 L7.7 7.7 M7.7 -7.7 L-7.7 7.7" stroke="#868A98" stroke-width="2.4"/></svg>
<svg style="left:2880px;top:1200px" width="64" height="64" viewBox="-32 -32 64 64" fill="none" stroke-linecap="round" stroke-linejoin="round"><circle cx="0" cy="-12.5" r="2.6" fill="#6C707E"/><circle cx="0" cy="0" r="2.6" fill="#6C707E"/><circle cx="0" cy="12.5" r="2.6" fill="#6C707E"/></svg>
<div style="left:2964px;top:1230.5px;width:32px;height:2.6px;background:#6C707E;border-radius:1.3px;"></div>
<div style="left:512px;top:1302px;width:56px;height:56px;background:#DFE1E5;border-radius:9px;"></div>
<div style="left:580px;top:1302px;width:56px;height:56px;background:#DFE1E5;border-radius:9px;"></div>
<div style="left:494px;top:1307px;width:2px;height:46px;background:#DCDEE4;"></div>
<div style="left:649.5px;top:1307px;width:2px;height:46px;background:#DCDEE4;"></div>
<div style="left:873.5px;top:1307px;width:2px;height:46px;background:#DCDEE4;"></div>
<svg style="left:226px;top:1380px" width="64" height="64" viewBox="-32 -32 64 64" fill="none" stroke-linecap="round" stroke-linejoin="round"><path d="M-8.75 -4.35 L0 4.35 L8.75 -4.35" stroke="#868A98" stroke-width="2.6"/></svg>
<svg style="left:279px;top:1380px" width="64" height="64" viewBox="-32 -32 64 64" fill="none" stroke-linecap="round" stroke-linejoin="round"><path d="M-12.9 1.4 L-4.1 9.6 L13.3 -8.0" stroke="#69A66E" stroke-width="5"/></svg>
<div class="t" style="left:341.3px;top:1383.0px;height:60px;line-height:60px;font-size:33px;color:#000;letter-spacing:-0.108px;">FactoryBeanTest</div>
<div class="t" style="left:672.5px;top:1384.0px;height:60px;line-height:60px;font-size:28px;color:#8C909C;letter-spacing:-0.739px;">131</div>
<svg style="left:327.5px;top:1439px" width="64" height="64" viewBox="-32 -32 64 64" fill="none" stroke-linecap="round" stroke-linejoin="round"><path d="M-12.9 1.4 L-4.1 9.6 L13.3 -8.0" stroke="#69A66E" stroke-width="5"/></svg>
<div class="t" style="left:389px;top:1443.0px;height:60px;line-height:60px;font-size:33px;color:#000;letter-spacing:-0.261px;width:276px;overflow:hidden;">testUserFactoryBean</div>
<div class="t" style="left:672.5px;top:1443.0px;height:60px;line-height:60px;font-size:28px;color:#1F2024;letter-spacing:-0.739px;">131</div>
<svg style="left:805.5px;top:1372px" width="64" height="64" viewBox="-32 -32 64 64" fill="none" stroke-linecap="round" stroke-linejoin="round"><path d="M-12.9 1.4 L-4.1 9.6 L13.3 -8.0" stroke="#69A66E" stroke-width="5"/></svg>
<div class="t" style="left:1036px;top:1375.0px;height:60px;line-height:60px;font-size:33px;color:#000;">:</div>
<div class="t" style="left:1051.5px;top:1375.0px;height:60px;line-height:60px;font-size:33px;color:#000;letter-spacing:-3.353px;">1</div>
<div class="t" style="left:1105.5px;top:1375.0px;height:60px;line-height:60px;font-size:33px;color:#8C909C;letter-spacing:-3.353px;">1</div>
<div class="t" style="left:1233px;top:1375.0px;height:60px;line-height:60px;font-size:33px;color:#8C909C;">–</div>
<div class="t" style="left:1259px;top:1375.0px;height:60px;line-height:60px;font-size:33px;color:#8C909C;letter-spacing:-2.520px;">131</div>
<div class="m" style="left:999px;top:1463.6px;height:52px;line-height:52px;font-size:30px;color:#000;">1</div>
<div class="m" style="left:849px;top:1515.6px;height:52px;line-height:52px;font-size:30px;color:#000;">User{id=null, username='null', password='null', age=null}</div>
<div class="m" style="left:849px;top:1567.6px;height:52px;line-height:52px;font-size:30px;color:#000;">class com.codermast.spring6.iocxml.bean.User</div>
<div style="left:2958px;top:1680px;width:56px;height:56px;background:#DFE1E5;border-radius:9px;"></div>
<svg style="left:126px;top:1896px" width="64" height="64" viewBox="-32 -32 64 64" fill="none" stroke-linecap="round" stroke-linejoin="round"><rect x="-9" y="-9" width="18" height="18" rx="4" fill="#E7EFFD" stroke="#3574F0" stroke-width="2.4"/></svg>
<div class="t" style="left:179px;top:1898.0px;height:60px;line-height:60px;font-size:33px;color:#6C707E;letter-spacing:-0.164px;">Spring6</div>
<svg style="left:292px;top:1896px" width="64" height="64" viewBox="-32 -32 64 64" fill="none" stroke-linecap="round" stroke-linejoin="round"><path d="M-4.5 -9.0 L4.5 0 L-4.5 9.0" stroke="#818594" stroke-width="2.6"/></svg>
<svg style="left:332px;top:1896px" width="64" height="64" viewBox="-32 -32 64 64" fill="none" stroke-linecap="round" stroke-linejoin="round"><rect x="-9" y="-9" width="18" height="18" rx="4" fill="#E7EFFD" stroke="#3574F0" stroke-width="2.4"/></svg>
<div class="t" style="left:385px;top:1898.0px;height:60px;line-height:60px;font-size:33px;color:#6C707E;letter-spacing:0.485px;">spring6-ioc-xml</div>
<svg style="left:615.5px;top:1896px" width="64" height="64" viewBox="-32 -32 64 64" fill="none" stroke-linecap="round" stroke-linejoin="round"><path d="M-4.5 -9.0 L4.5 0 L-4.5 9.0" stroke="#818594" stroke-width="2.6"/></svg>
<div class="t" style="left:679px;top:1898.0px;height:60px;line-height:60px;font-size:33px;color:#6C707E;letter-spacing:-0.097px;">src</div>
<svg style="left:721.5px;top:1896px" width="64" height="64" viewBox="-32 -32 64 64" fill="none" stroke-linecap="round" stroke-linejoin="round"><path d="M-4.5 -9.0 L4.5 0 L-4.5 9.0" stroke="#818594" stroke-width="2.6"/></svg>
<div class="t" style="left:785px;top:1898.0px;height:60px;line-height:60px;font-size:33px;color:#6C707E;letter-spacing:0.203px;">test</div>
<svg style="left:838px;top:1896px" width="64" height="64" viewBox="-32 -32 64 64" fill="none" stroke-linecap="round" stroke-linejoin="round"><path d="M-4.5 -9.0 L4.5 0 L-4.5 9.0" stroke="#818594" stroke-width="2.6"/></svg>
<div class="t" style="left:900px;top:1898.0px;height:60px;line-height:60px;font-size:33px;color:#6C707E;letter-spacing:-0.784px;">java</div>
<svg style="left:958px;top:1896px" width="64" height="64" viewBox="-32 -32 64 64" fill="none" stroke-linecap="round" stroke-linejoin="round"><path d="M-4.5 -9.0 L4.5 0 L-4.5 9.0" stroke="#818594" stroke-width="2.6"/></svg>
<svg style="left:1008px;top:1895px" width="64" height="64" viewBox="-32 -32 64 64" fill="none" stroke-linecap="round" stroke-linejoin="round"><g opacity="1"><circle cx="0" cy="0" r="16.0" fill="#E9EEFB" stroke="#3C6EEA" stroke-width="2.5"/><path d="M6 -4.4 A7.2 7.2 0 1 0 6 4.4" stroke="#3C6EEA" stroke-width="2.5" fill="none" stroke-linecap="butt"/></g></svg>
<div class="t" style="left:1071px;top:1898.0px;height:60px;line-height:60px;font-size:33px;color:#6C707E;letter-spacing:-0.108px;">FactoryBeanTest</div>
<div class="t" style="left:2417px;top:1898.0px;height:60px;line-height:60px;font-size:33px;color:#6C707E;letter-spacing:-1.107px;">15:2</div>
<div class="t" style="left:2517px;top:1898.0px;height:60px;line-height:60px;font-size:33px;color:#6C707E;letter-spacing:-2.506px;">LF</div>
<div class="t" style="left:2593px;top:1898.0px;height:60px;line-height:60px;font-size:33px;color:#6C707E;letter-spacing:-0.098px;">UTF-8</div>
<div class="t" style="left:2807px;top:1898.0px;height:60px;line-height:60px;font-size:33px;color:#6C707E;">4 </div>
<svg style="left:129px;top:195px" width="64" height="64" viewBox="-32 -32 64 64" fill="none" stroke-linecap="round" stroke-linejoin="round"><path d="M-21 -13 A3.5 3.5 0 0 1 -17.5 -16.5 H-8 L-2.5 -10.5 H17.5 A3.5 3.5 0 0 1 21 -7 V13 A3.5 3.5 0 0 1 17.5 16.5 H-17.5 A3.5 3.5 0 0 1 -21 13 Z" stroke="#6C707E" stroke-width="3.6" fill="none" /></svg>
<svg style="left:129px;top:295px" width="64" height="64" viewBox="-32 -32 64 64" fill="none" stroke-linecap="round" stroke-linejoin="round"><path d="M-24 0 H-10 M10 0 H24" stroke="#6C707E" stroke-width="3.6" fill="none" /><circle cx="0" cy="0" r="8" stroke="#6C707E" stroke-width="3.6" fill="none"/></svg>
<svg style="left:129px;top:395px" width="64" height="64" viewBox="-32 -32 64 64" fill="none" stroke-linecap="round" stroke-linejoin="round"><circle cx="-12.5" cy="-14.5" r="6.3" stroke="#6C707E" stroke-width="3.4" fill="none"/><circle cx="-12.5" cy="14.5" r="6.3" stroke="#6C707E" stroke-width="3.4" fill="none"/><circle cx="15" cy="14.5" r="6.3" stroke="#6C707E" stroke-width="3.4" fill="none"/><path d="M-12.5 -8 V8" stroke="#6C707E" stroke-width="3.4" fill="none" /><path d="M15 8 V-7 A6.5 6.5 0 0 0 8.5 -13.5 H0" stroke="#6C707E" stroke-width="3.4" fill="none" /><path d="M6 -20.5 L-1 -13.5 L6 -6.5" stroke="#6C707E" stroke-width="3.4" fill="none" /></svg>
<div style="left:132px;top:492px;width:60px;height:2px;background:#C9CCD6;"></div>
<svg style="left:129px;top:523px" width="64" height="64" viewBox="-32 -32 64 64" fill="none" stroke-linecap="round" stroke-linejoin="round"><rect x="-18" y="-18" width="14" height="14" rx="3" stroke="#6C707E" stroke-width="3.4"/><rect x="-18" y="4.5" width="14" height="14" rx="3" stroke="#6C707E" stroke-width="3.4"/><rect x="4.5" y="4.5" width="14" height="14" rx="3" stroke="#6C707E" stroke-width="3.4"/></svg>
<svg style="left:129px;top:623px" width="64" height="64" viewBox="-32 -32 64 64" fill="none" stroke-linecap="round" stroke-linejoin="round"><circle cx="-16.3" cy="0" r="3.7" fill="#6C707E"/><circle cx="0" cy="0" r="3.7" fill="#6C707E"/><circle cx="16.3" cy="0" r="3.7" fill="#6C707E"/></svg>
<svg style="left:129px;top:1208px" width="64" height="64" viewBox="-32 -32 64 64" fill="none" stroke-linecap="round" stroke-linejoin="round"><ellipse cx="-0.3" cy="-14.6" rx="17.3" ry="5.8" stroke="#6C707E" stroke-width="3.3"/><path d="M-17.6 -14.6 V14 M17 -14.6 V-6" stroke="#6C707E" stroke-width="3.3" fill="none" /><path d="M-17.6 -6 C-17.6 -2 -9.5 0.8 -0.3 0.8 C9 0.8 17 -2 17 -6" stroke="#6C707E" stroke-width="3.3" fill="none" /><path d="M-17.6 4 C-17.6 8 -9.5 10.7 -0.3 10.7" stroke="#6C707E" stroke-width="3.3" fill="none" /><path d="M-17.6 14 C-17.6 17.5 -9.5 19.4 -0.3 19.4" stroke="#6C707E" stroke-width="3.3" fill="none" /><path d="M4 12.9 L11 20.7 L22.8 8" stroke="#6C707E" stroke-width="3.3" fill="none" /></svg>
<svg style="left:129px;top:1308px" width="64" height="64" viewBox="-32 -32 64 64" fill="none" stroke-linecap="round" stroke-linejoin="round"><path d="M-21.5 -22.5 H-13 L-10.5 -21 H-6 L-3 -22.5 H5 C13 -22.5 19 -17.5 21.5 -9.5 C17 -13 12 -14.5 8 -13.5 L4 -10.5 H-3 L-6 -12.5 H-11 L-13.5 -10.5 H-21.5 Z" stroke="#6C707E" stroke-width="3.3" fill="none" /><path d="M-3.5 -10.5 V-3 L-6 3 V20.5 H6 V3 L3.5 -3 V-10.5" stroke="#6C707E" stroke-width="3.3" fill="none" /></svg>
<svg style="left:129px;top:1407.3px" width="64" height="64" viewBox="-32 -32 64 64" fill="none" stroke-linecap="round" stroke-linejoin="round"><path d="M-12 -19 H12 L23 0 L12 19 H-12 L-23 0 Z" stroke="#6C707E" stroke-width="3.3" fill="none" /><path d="M-6 -9.5 V9.5 L10 0 Z" stroke="#6C707E" stroke-width="3.3" fill="none" /></svg>
<svg style="left:129px;top:1508px" width="64" height="64" viewBox="-32 -32 64 64" fill="none" stroke-linecap="round" stroke-linejoin="round"><path d="M-15 -17 V17 A1.5 1.5 0 0 0 -12.7 18.3 L16 1.3 A1.5 1.5 0 0 0 16 -1.3 L-12.7 -18.3 A1.5 1.5 0 0 0 -15 -17 Z" stroke="#FFFFFF" stroke-width="3.8" fill="none" /></svg>
<svg style="left:129px;top:1607px" width="64" height="64" viewBox="-32 -32 64 64" fill="none" stroke-linecap="round" stroke-linejoin="round"><rect x="-21" y="-18" width="42" height="36" rx="3.5" stroke="#6C707E" stroke-width="3.6"/><path d="M-11 -8.5 L-3 -2 L-11 4.5 M0 8 H10" stroke="#6C707E" stroke-width="3.4" fill="none" /></svg>
<svg style="left:129px;top:1707px" width="64" height="64" viewBox="-32 -32 64 64" fill="none" stroke-linecap="round" stroke-linejoin="round"><circle cx="0" cy="0" r="20.5" stroke="#6C707E" stroke-width="3.6" fill="none"/><path d="M0 -10.5 V2.5" stroke="#6C707E" stroke-width="3.8" fill="none" /><circle cx="0" cy="9.5" r="2.6" fill="#6C707E"/></svg>
<svg style="left:129px;top:1806px" width="64" height="64" viewBox="-32 -32 64 64" fill="none" stroke-linecap="round" stroke-linejoin="round"><circle cx="-11" cy="-14.5" r="6.3" stroke="#6C707E" stroke-width="3.4" fill="none"/><circle cx="11.5" cy="-7.5" r="6.3" stroke="#6C707E" stroke-width="3.4" fill="none"/><path d="M-11 -8 V21" stroke="#6C707E" stroke-width="3.4" fill="none" /><path d="M11.5 -1 C11.5 8 4 9.5 -10 9.5" stroke="#6C707E" stroke-width="3.4" fill="none" /></svg>
<svg style="left:3053px;top:195px" width="64" height="64" viewBox="-32 -32 64 64" fill="none" stroke-linecap="round" stroke-linejoin="round"><path d="M-12.5 0.9 V-8.5 A12.5 12 0 0 1 12.5 -8.5 V0.9 L18.3 12 A1.5 1.5 0 0 1 17 14.1 H-17 A1.5 1.5 0 0 1 -18.3 12 Z" stroke="#6C707E" stroke-width="3.1" fill="none" /><path d="M-5.2 19 A5.2 5.2 0 0 0 5.2 19 Z" fill="#6C707E"/><circle cx="16.3" cy="-16.3" r="12" fill="#F7F8FA"/><circle cx="16.3" cy="-16.3" r="8.6" fill="#5F87E8"/></svg>
<svg style="left:3053px;top:295px" width="64" height="64" viewBox="-32 -32 64 64" fill="none" stroke-linecap="round" stroke-linejoin="round"><path d="M-16.3 -15.6 C-15.1 -16.0 -11.4 -17.5 -9.0 -18.0 C-6.6 -18.5 -4.5 -18.6 -2.0 -18.5 C0.5 -18.4 3.4 -18.3 6.0 -17.5 C8.6 -16.7 11.5 -15.4 13.4 -13.9 C15.3 -12.4 16.7 -10.4 17.5 -8.5 C18.3 -6.6 18.5 -4.4 18.3 -2.5 C18.1 -0.6 17.7 1.3 16.5 3.0 C15.3 4.7 13.2 6.4 11.0 7.5 C8.8 8.6 5.8 9.4 3.5 9.7 C1.2 10.0 -1.2 9.8 -3.0 9.2 C-4.8 8.6 -6.5 7.2 -7.5 6.0 C-8.5 4.8 -8.9 3.2 -8.8 2.0 C-8.7 0.8 -8.0 -0.5 -7.0 -1.3 C-6.0 -2.1 -4.3 -2.6 -3.1 -2.7 C-1.9 -2.8 -0.4 -2.0 0.2 -1.8" stroke="#6C707E" stroke-width="3.5" fill="none" /><path d="M16.1 15.7 C14.8 16.1 10.7 17.4 8.0 17.8 C5.3 18.2 2.9 18.4 0.2 18.2 C-2.5 18.0 -5.6 17.8 -8.0 16.8 C-10.4 15.8 -12.4 14.0 -14.0 12.3 C-15.6 10.6 -17.1 8.5 -17.8 6.5 C-18.5 4.5 -18.6 2.3 -18.3 0.5 C-18.1 -1.3 -17.4 -3.1 -16.3 -4.5 C-15.2 -5.9 -13.7 -7.1 -12.0 -8.0 C-10.3 -8.9 -8.0 -9.5 -6.0 -9.7 C-4.0 -9.9 -1.9 -9.7 0.0 -9.3 C1.9 -8.9 4.0 -8.3 5.5 -7.3 C7.0 -6.3 8.6 -4.8 9.0 -3.5 C9.4 -2.2 8.9 -0.6 8.0 0.5 C7.1 1.6 4.9 2.5 3.5 2.8 C2.1 3.0 0.2 2.1 -0.4 2.0" stroke="#6C707E" stroke-width="3.5" fill="none" /></svg>
<svg style="left:3053px;top:395px" width="64" height="64" viewBox="-32 -32 64 64" fill="none" stroke-linecap="round" stroke-linejoin="round"><ellipse cx="0" cy="-13" rx="18" ry="7" stroke="#6C707E" stroke-width="3.3"/><path d="M-18 -13 V13 C-18 17 -10 20.5 0 20.5 C10 20.5 18 17 18 13 V-13" stroke="#6C707E" stroke-width="3.3" fill="none" /><path d="M-18 -4 C-18 0 -10 3.5 0 3.5 C10 3.5 18 0 18 -4 M-18 4.5 C-18 8.5 -10 12 0 12 C10 12 18 8.5 18 4.5" stroke="#6C707E" stroke-width="3.3" fill="none" /></svg>
<svg style="left:3054px;top:495px" width="64" height="64" viewBox="-32 -32 64 64" fill="none" stroke-linecap="round" stroke-linejoin="round"><g transform="scale(1.0)"><path d="M-20.4 13.4 L-14.5 -13.2 M-15.9 -6.5 C-12.5 -12 -7.5 -14 -3.5 -13.3 C0.8 -12.5 2.8 -9.5 1.8 -5 L-2.3 13.4 M2.2 -6.5 C5.6 -12 10.6 -14 14.6 -13.3 C18.9 -12.5 20.9 -9.5 19.9 -5 L15.8 13.4" stroke="#6C707E" stroke-width="5.00" fill="none"/></g></svg>
<svg style="left:596px;top:103px" width="48" height="48" viewBox="-24 -24 48 48" fill="none" stroke-linecap="round" stroke-linejoin="round"><circle cx="-9" cy="-11.5" r="5" stroke="#CED0D6" stroke-width="2.6" fill="none"/><circle cx="6" cy="-6" r="5" stroke="#CED0D6" stroke-width="2.6" fill="none"/><path d="M-9 -6.5 V16" stroke="#CED0D6" stroke-width="2.6" fill="none" /><path d="M6 -1 C6 5.5 1 7 -8 7" stroke="#CED0D6" stroke-width="2.6" fill="none" /></svg>
<svg style="left:733px;top:111px" width="32" height="32" viewBox="-16 -16 32 32" fill="none" stroke-linecap="round" stroke-linejoin="round"><path d="M-7.5 8 L7 -6.5 M-4 -7.5 H7.5 V4" stroke="#57A85F" stroke-width="4" fill="none" stroke-linecap="butt" stroke-linejoin="miter"/></svg>
<svg style="left:1736.1px;top:94.1px" width="64" height="64" viewBox="-32 -32 64 64" fill="none" stroke-linecap="round" stroke-linejoin="round"><path d="M-3.7 -12.2 L-16.4 0 L-3.7 12.2 Z" stroke="#8B4D4F" stroke-width="2.6" fill="#43292C"/><path d="M3.7 -12.2 L16.4 0 L3.7 12.2 Z" stroke="#4E7A50" stroke-width="2.6" fill="#2C3A2E"/></svg>
<svg style="left:2457px;top:94px" width="64" height="64" viewBox="-32 -32 64 64" fill="none" stroke-linecap="round" stroke-linejoin="round"><path d="M-13 -15 V15 A1.5 1.5 0 0 0 -10.8 16.3 L14 1.3 A1.5 1.5 0 0 0 14 -1.3 L-10.8 -16.3 A1.5 1.5 0 0 0 -13 -15 Z" stroke="#6CAC6A" stroke-width="4.2" fill="none" /></svg>
<svg style="left:2543.5px;top:93.6px" width="64" height="64" viewBox="-32 -32 64 64" fill="none" stroke-linecap="round" stroke-linejoin="round"><path d="M-10.5 0 C-10.5 -7 -6 -10 0 -10 C6 -10 10.5 -7 10.5 0 V5 C10.5 11.5 6 16 0 16 C-6 16 -10.5 11.5 -10.5 5 Z" stroke="#6CAC6A" stroke-width="3.6" fill="none" /><path d="M-6.5 -10 C-6.5 -14.5 -3.5 -17.5 0 -17.5 C3.5 -17.5 6.5 -14.5 6.5 -10" stroke="#6CAC6A" stroke-width="3.6" fill="none" /><path d="M-10.5 3 H-18 M10.5 3 H18 M-10.5 -4 L-17 -8.5 M10.5 -4 L17 -8.5 M-10 10 L-16.5 14.5 M10 10 L16.5 14.5" stroke="#6CAC6A" stroke-width="3.4" fill="none" /></svg>
<svg style="left:2632px;top:94.2px" width="64" height="64" viewBox="-32 -32 64 64" fill="none" stroke-linecap="round" stroke-linejoin="round"><circle cx="0" cy="-13.5" r="3.2" fill="#E4E5EA"/><circle cx="0" cy="0" r="3.2" fill="#E4E5EA"/><circle cx="0" cy="13.5" r="3.2" fill="#E4E5EA"/></svg>
<svg style="left:2851.5px;top:91px" width="72" height="72" viewBox="-36 -36 72 72" fill="none" stroke-linecap="round" stroke-linejoin="round"><circle cx="-2.6" cy="-14.4" r="8.2" stroke="#CED0D6" stroke-width="3.5" fill="none"/><path d="M-20.5 13 C-20.5 4.5 -13 0 -2.5 0 C1 0 4 0.6 6.2 1.8" stroke="#CED0D6" stroke-width="3.5" fill="none" /><path d="M-20.5 13 H-4.5" stroke="#CED0D6" stroke-width="3.5" fill="none" /><path d="M12 2.6 V22.4 M2 12.4 H22" stroke="#CED0D6" stroke-width="3.5" fill="none" /></svg>
<svg style="left:2953.5px;top:94px" width="64" height="64" viewBox="-32 -32 64 64" fill="none" stroke-linecap="round" stroke-linejoin="round"><circle cx="-2.8" cy="-3.7" r="15.7" stroke="#CED0D6" stroke-width="3.6" fill="none"/><path d="M8.5 7.6 L20.4 19.9" stroke="#CED0D6" stroke-width="3.8" fill="none" /></svg>
<svg style="left:3053px;top:93px" width="64" height="64" viewBox="-32 -32 64 64" fill="none" stroke-linecap="round" stroke-linejoin="round"><path d="M14.3 0.0 L14.4 0.6 L14.5 1.3 L14.8 1.9 L15.2 2.7 L15.8 3.5 L17.1 4.6 L18.3 5.8 L18.7 6.8 L18.9 7.8 L18.9 8.8 L18.7 9.7 L18.3 10.5 L17.7 11.3 L17.1 11.9 L16.2 12.5 L15.3 12.8 L14.2 13.0 L12.5 12.5 L10.9 11.9 L9.9 11.8 L9.1 11.9 L8.4 11.9 L7.7 12.1 L7.2 12.4 L6.6 12.7 L6.2 13.2 L5.7 13.8 L5.3 14.5 L4.9 15.4 L4.6 17.1 L4.2 18.8 L3.5 19.6 L2.7 20.3 L1.8 20.7 L0.9 21.0 L0.0 21.1 L-0.9 21.0 L-1.8 20.7 L-2.7 20.3 L-3.5 19.6 L-4.2 18.8 L-4.6 17.1 L-4.9 15.4 L-5.3 14.5 L-5.7 13.8 L-6.2 13.2 L-6.6 12.7 L-7.1 12.4 L-7.7 12.1 L-8.4 11.9 L-9.1 11.9 L-9.9 11.8 L-10.9 11.9 L-12.5 12.5 L-14.2 13.0 L-15.3 12.8 L-16.2 12.5 L-17.1 11.9 L-17.7 11.3 L-18.3 10.6 L-18.7 9.7 L-18.9 8.8 L-18.9 7.8 L-18.7 6.8 L-18.3 5.8 L-17.1 4.6 L-15.8 3.5 L-15.2 2.7 L-14.8 1.9 L-14.5 1.3 L-14.4 0.6 L-14.3 0.0 L-14.4 -0.6 L-14.5 -1.3 L-14.8 -1.9 L-15.2 -2.7 L-15.8 -3.5 L-17.1 -4.6 L-18.3 -5.8 L-18.7 -6.8 L-18.9 -7.8 L-18.9 -8.8 L-18.7 -9.7 L-18.3 -10.6 L-17.7 -11.3 L-17.1 -11.9 L-16.2 -12.5 L-15.3 -12.8 L-14.2 -13.0 L-12.5 -12.5 L-10.9 -11.9 L-9.9 -11.8 L-9.1 -11.9 L-8.4 -11.9 L-7.7 -12.1 L-7.2 -12.4 L-6.6 -12.7 L-6.2 -13.2 L-5.7 -13.8 L-5.3 -14.5 L-4.9 -15.4 L-4.6 -17.1 L-4.2 -18.8 L-3.5 -19.6 L-2.7 -20.3 L-1.8 -20.7 L-0.9 -21.0 L-0.0 -21.1 L0.9 -21.0 L1.8 -20.7 L2.7 -20.3 L3.5 -19.6 L4.2 -18.8 L4.6 -17.1 L4.9 -15.4 L5.3 -14.5 L5.7 -13.8 L6.2 -13.2 L6.6 -12.7 L7.1 -12.4 L7.7 -12.1 L8.4 -11.9 L9.1 -11.9 L9.9 -11.8 L10.9 -11.9 L12.5 -12.5 L14.2 -13.0 L15.3 -12.8 L16.2 -12.5 L17.1 -11.9 L17.7 -11.3 L18.3 -10.5 L18.7 -9.7 L18.9 -8.8 L18.9 -7.8 L18.7 -6.8 L18.3 -5.8 L17.1 -4.6 L15.8 -3.5 L15.2 -2.7 L14.8 -1.9 L14.5 -1.3 L14.4 -0.6 Z" stroke="#CED0D6" stroke-width="3.6" fill="none" /><circle cx="0" cy="0" r="7.4" stroke="#CED0D6" stroke-width="3.5" fill="none"/></svg>
<svg style="left:1031.5px;top:502px" width="64" height="64" viewBox="-32 -32 64 64" fill="none" stroke-linecap="round" stroke-linejoin="round"><circle cx="-3.9" cy="-4.3" r="13.8" fill="#69A66E"/><path d="M-12 -4.8 L-6.3 1.1 L4.6 -10" stroke="#FFFFFF" stroke-width="2.7" fill="none" stroke-linecap="butt" stroke-linejoin="miter"/><path d="M1.3 -0.3 V14.3 A1.5 1.5 0 0 0 3.6 15.6 L15.5 8.3 A1.5 1.5 0 0 0 15.5 5.7 L3.6 -1.6 A1.5 1.5 0 0 0 1.3 -0.3 Z" fill="#F3FAF3" stroke="#FFFFFF" stroke-width="6.5"/><path d="M1.3 -0.3 V14.3 A1.5 1.5 0 0 0 3.6 15.6 L15.5 8.3 A1.5 1.5 0 0 0 15.5 5.7 L3.6 -1.6 A1.5 1.5 0 0 0 1.3 -0.3 Z" fill="#F3FAF3" stroke="#3A8A3E" stroke-width="2.6"/></svg>
<svg style="left:1031.5px;top:606px" width="64" height="64" viewBox="-32 -32 64 64" fill="none" stroke-linecap="round" stroke-linejoin="round"><circle cx="-3.9" cy="-4.3" r="13.8" fill="#69A66E"/><path d="M-12 -4.8 L-6.3 1.1 L4.6 -10" stroke="#FFFFFF" stroke-width="2.7" fill="none" stroke-linecap="butt" stroke-linejoin="miter"/><path d="M1.3 -0.3 V14.3 A1.5 1.5 0 0 0 3.6 15.6 L15.5 8.3 A1.5 1.5 0 0 0 15.5 5.7 L3.6 -1.6 A1.5 1.5 0 0 0 1.3 -0.3 Z" fill="#F3FAF3" stroke="#FFFFFF" stroke-width="6.5"/><path d="M1.3 -0.3 V14.3 A1.5 1.5 0 0 0 3.6 15.6 L15.5 8.3 A1.5 1.5 0 0 0 15.5 5.7 L3.6 -1.6 A1.5 1.5 0 0 0 1.3 -0.3 Z" fill="#F3FAF3" stroke="#3A8A3E" stroke-width="2.6"/></svg>
<svg style="left:215px;top:1298px" width="64" height="64" viewBox="-32 -32 64 64" fill="none" stroke-linecap="round" stroke-linejoin="round"><g transform="translate(-2,-1)"><path d="M6 9.5 A13 13 0 1 1 10 -9" stroke="#6C707E" stroke-width="3.2" fill="none" /><path d="M11.5 -17.5 V-8 H2" stroke="#6C707E" stroke-width="3.2" fill="none" /></g><rect x="2" y="1" width="20" height="22" fill="#F7F8FA"/><path d="M4 1.5 v17.0 a1.2 1.2 0 0 0 1.9 1 l13.0 -8.5 a1.2 1.2 0 0 0 0 -2 l-13.0 -8.5 a1.2 1.2 0 0 0 -1.9 1 Z" fill="#F2FBF2" stroke="#3E8E41" stroke-width="2.8"/></svg>
<svg style="left:285px;top:1298px" width="64" height="64" viewBox="-32 -32 64 64" fill="none" stroke-linecap="round" stroke-linejoin="round"><g transform="translate(-2,-1)"><path d="M6 9.5 A13 13 0 1 1 10 -9" stroke="#C6C6C6" stroke-width="3.2" fill="none" /><path d="M11.5 -17.5 V-8 H2" stroke="#C6C6C6" stroke-width="3.2" fill="none" /></g><circle cx="10" cy="9" r="11" fill="#F7F8FA"/><circle cx="10" cy="9" r="8.8" fill="#C6C6C6"/><path d="M10 4 V10" stroke="#F7F8FA" stroke-width="2.6"/><circle cx="10" cy="13.3" r="1.5" fill="#F7F8FA"/></svg>
<svg style="left:351px;top:1298px" width="64" height="64" viewBox="-32 -32 64 64" fill="none" stroke-linecap="round" stroke-linejoin="round"><path d="M-7 -13 A14 14 0 0 0 -11 11" stroke="#6C707E" stroke-width="3.2" fill="none" /><path d="M-17.5 12.5 H-9.5 V4.5" stroke="#6C707E" stroke-width="3.2" fill="none" /><path d="M5 -13 A14 14 0 0 1 12 -3" stroke="#6C707E" stroke-width="3.2" fill="none" /><path d="M1.5 -7 V-14.5 H9" stroke="#6C707E" stroke-width="3.2" fill="none" /><rect x="0" y="1" width="20" height="22" fill="#F7F8FA"/><path d="M3 1.5 v17.0 a1.2 1.2 0 0 0 1.9 1 l13.0 -8.5 a1.2 1.2 0 0 0 0 -2 l-13.0 -8.5 a1.2 1.2 0 0 0 -1.9 1 Z" fill="#F2FBF2" stroke="#3E8E41" stroke-width="2.8"/></svg>
<svg style="left:420px;top:1298px" width="64" height="64" viewBox="-32 -32 64 64" fill="none" stroke-linecap="round" stroke-linejoin="round"><rect x="-14.5" y="-14.5" width="29" height="29" rx="4" fill="#CFCFCF" stroke="#C4C4C4" stroke-width="2"/></svg>
<svg style="left:508px;top:1298px" width="64" height="64" viewBox="-32 -32 64 64" fill="none" stroke-linecap="round" stroke-linejoin="round"><path d="M-14.5 0.5 L-4 11 L14.5 -10.5" stroke="#6C707E" stroke-width="3.6" fill="none" /></svg>
<svg style="left:576px;top:1298px" width="64" height="64" viewBox="-32 -32 64 64" fill="none" stroke-linecap="round" stroke-linejoin="round"><circle cx="0" cy="0" r="15.8" stroke="#6C707E" stroke-width="3.2" fill="none"/><path d="M-11 11 L11 -11" stroke="#6C707E" stroke-width="3.2" fill="none" /></svg>
<svg style="left:666px;top:1298px" width="64" height="64" viewBox="-32 -32 64 64" fill="none" stroke-linecap="round" stroke-linejoin="round"><path d="M-12 -12 V10.5 M-20.5 2.5 L-12 11 L-3.5 2.5" stroke="#6C707E" stroke-width="3.2" fill="none" /><path d="M-1 -12 H15 M3 -0.5 H15 M7 11 H15" stroke="#6C707E" stroke-width="3.2" fill="none" /><path d="M20 21 L20 11 L10 21 Z" fill="#6C707E"/></svg>
<svg style="left:732px;top:1298px" width="64" height="64" viewBox="-32 -32 64 64" fill="none" stroke-linecap="round" stroke-linejoin="round"><path d="M-12 -7.5 V10 A3 3 0 0 0 -9 13 H9" stroke="#6C707E" stroke-width="3.2" fill="none" /><path d="M13 -13 L-2 2 M-2 -8.5 V2 H8.5" stroke="#6C707E" stroke-width="3.2" fill="none" /></svg>
<svg style="left:800.5px;top:1298px" width="64" height="64" viewBox="-32 -32 64 64" fill="none" stroke-linecap="round" stroke-linejoin="round"><circle cx="0" cy="0" r="15.5" stroke="#6C707E" stroke-width="3.2" fill="none"/><path d="M0 -7 V1 L6 4.5" stroke="#6C707E" stroke-width="3.2" fill="none" /><path d="M21 21 L21 11 L11 21 Z" fill="#6C707E"/></svg>
<svg style="left:888px;top:1298px" width="64" height="64" viewBox="-32 -32 64 64" fill="none" stroke-linecap="round" stroke-linejoin="round"><path d="M-17 -6.5 A3.5 3.5 0 0 1 -13.5 -10 H-9.5 L-7 -14.5 H7 L9.5 -10 H13.5 A3.5 3.5 0 0 1 17 -6.5 V10.5 A3.5 3.5 0 0 1 13.5 14 H-13.5 A3.5 3.5 0 0 1 -17 10.5 Z" stroke="#BFBFBF" stroke-width="3.2" fill="none" /><circle cx="0" cy="2" r="6.3" stroke="#BFBFBF" stroke-width="3.2" fill="none"/><circle cx="11.5" cy="-4" r="1.6" fill="#BFBFBF"/></svg>
<svg style="left:958px;top:1298px" width="64" height="64" viewBox="-32 -32 64 64" fill="none" stroke-linecap="round" stroke-linejoin="round"><path d="M-11 -6.5 V-13.5 A3.5 3.5 0 0 1 -7.5 -17 H11 A3.5 3.5 0 0 1 14.5 -13.5 V13.5 A3.5 3.5 0 0 1 11 17 H-7.5 A3.5 3.5 0 0 1 -11 13.5 V6.5" stroke="#BFBFBF" stroke-width="3.2" fill="none" /><path d="M-16 0 H5 M-1 -7 L6 0 L-1 7" stroke="#BFBFBF" stroke-width="3.2" fill="none" /></svg>
<svg style="left:1024px;top:1298px" width="64" height="64" viewBox="-32 -32 64 64" fill="none" stroke-linecap="round" stroke-linejoin="round"><path d="M-16.5 13.5 A17.5 17.5 0 1 1 16.5 13.5 Z" stroke="#BFBFBF" stroke-width="3.2" fill="none" /><circle cx="0" cy="4.5" r="3.5" stroke="#BFBFBF" stroke-width="3" fill="none"/><path d="M2.5 2 L10 -4" stroke="#BFBFBF" stroke-width="3.4" fill="none" /><path d="M22.5 22 L22.5 12 L12.5 22 Z" fill="#BFBFBF"/></svg>
<svg style="left:1092px;top:1298px" width="64" height="64" viewBox="-32 -32 64 64" fill="none" stroke-linecap="round" stroke-linejoin="round"><circle cx="0" cy="-12.5" r="2.9" fill="#6C707E"/><circle cx="0" cy="0" r="2.9" fill="#6C707E"/><circle cx="0" cy="12.5" r="2.9" fill="#6C707E"/></svg>
<svg style="left:2954px;top:1471.5px" width="64" height="64" viewBox="-32 -32 64 64" fill="none" stroke-linecap="round" stroke-linejoin="round"><path d="M0 14 V-13 M-10.5 -3 L0 -13.5 L10.5 -3" stroke="#C4C4C4" stroke-width="2.6" fill="none" /></svg>
<svg style="left:2954px;top:1539.5px" width="64" height="64" viewBox="-32 -32 64 64" fill="none" stroke-linecap="round" stroke-linejoin="round"><path d="M0 -14 V13 M-10.5 3 L0 13.5 L10.5 3" stroke="#C4C4C4" stroke-width="2.6" fill="none" /></svg>
<svg style="left:2954px;top:1610px" width="64" height="64" viewBox="-32 -32 64 64" fill="none" stroke-linecap="round" stroke-linejoin="round"><path d="M-16.5 -13.5 H16.5 M-16.5 -1.5 H10 A6 6 0 0 1 10 10.5 H2 M-16.5 10.5 H-7" stroke="#6C707E" stroke-width="2.6" fill="none" /><path d="M7.5 4.5 L1.5 10.5 L7.5 16.5" stroke="#6C707E" stroke-width="2.6" fill="none" /></svg>
<svg style="left:2954px;top:1676px" width="64" height="64" viewBox="-32 -32 64 64" fill="none" stroke-linecap="round" stroke-linejoin="round"><path d="M-16.5 -11.5 H-5 M-16.5 -0.5 H-5 M-16.5 11 H16.5" stroke="#6C707E" stroke-width="2.6" fill="none" /><path d="M8 -13 V3 M0.5 -4 L8 3.5 L15.5 -4" stroke="#6C707E" stroke-width="2.6" fill="none" /></svg>
<svg style="left:2954px;top:1744px" width="64" height="64" viewBox="-32 -32 64 64" fill="none" stroke-linecap="round" stroke-linejoin="round"><path d="M-9 -6 V-14 H9 V-6" stroke="#6C707E" stroke-width="2.6" fill="none" /><path d="M-9 8.5 H-13.5 A3 3 0 0 1 -16.5 5.5 V-3 A3 3 0 0 1 -13.5 -6 H13.5 A3 3 0 0 1 16.5 -3 V5.5 A3 3 0 0 1 13.5 8.5 H9" stroke="#6C707E" stroke-width="2.6" fill="none" /><path d="M-9 2.5 H9 V14 H-9 Z" stroke="#6C707E" stroke-width="2.6" fill="none" /><circle cx="11" cy="-1.5" r="1.6" fill="#6C707E"/></svg>
<svg style="left:2953.5px;top:1824px" width="64" height="64" viewBox="-32 -32 64 64" fill="none" stroke-linecap="round" stroke-linejoin="round"><path d="M-5.0 -10.0 L5.0 0 L-5.0 10.0" stroke="#6C707E" stroke-width="2.6"/></svg>
<svg style="left:2714px;top:1896px" width="64" height="64" viewBox="-32 -32 64 64" fill="none" stroke-linecap="round" stroke-linejoin="round"><path d="M-14.4 3.1 C-13.5 -8 -6.5 -14 0 -14 C7 -14 13 -9 14.5 -1.4" stroke="#6C707E" stroke-width="2.8" fill="none" /><path d="M-12.6 8.5 C-8 13 -3 14.3 0 14.3 C4.5 14.3 9 13.2 11.8 11.3" stroke="#6C707E" stroke-width="2.8" fill="none" /><path d="M-5.5 3.5 A4.6 4.6 0 0 1 2.5 -2.6" stroke="#6C707E" stroke-width="2.6" fill="none" /><path d="M-15.3 14.9 L15.4 -15.3" stroke="#6C707E" stroke-width="2.8" fill="none" /></svg>
<svg style="left:2961px;top:1896px" width="64" height="64" viewBox="-32 -32 64 64" fill="none" stroke-linecap="round" stroke-linejoin="round"><rect x="-14" y="-2" width="22" height="17" rx="3.5" stroke="#6C707E" stroke-width="3"/><path d="M-3 3.5 V9.5" stroke="#6C707E" stroke-width="3" fill="none" /><path d="M2 -2 V-7.5 A6.5 6.5 0 0 1 15 -7.5 V-5" stroke="#6C707E" stroke-width="3" fill="none" /></svg>
<svg style="left:3038px;top:1896px" width="64" height="64" viewBox="-32 -32 64 64" fill="none" stroke-linecap="round" stroke-linejoin="round"><circle cx="0" cy="0" r="15.8" stroke="#6C707E" stroke-width="3" fill="none"/><path d="M0 -8 V2" stroke="#6C707E" stroke-width="3.4" fill="none" /><circle cx="0" cy="8" r="2.2" fill="#6C707E"/></svg>
<div class="t" style="left:252px;top:199px;height:60px;line-height:60px;font-size:31px;font-weight:bold;color:#1F2024;font-family:'Liberation Sans','Noto Sans CJK SC',sans-serif;-webkit-text-stroke-width:0;">项目</div>
<div class="t" style="left:244px;top:1203px;height:60px;line-height:60px;font-size:33px;font-weight:bold;color:#1F2024;font-family:'Liberation Sans','Noto Sans CJK SC',sans-serif;-webkit-text-stroke-width:0;">运行</div>
<div class="t" style="left:718px;top:1384px;height:60px;line-height:60px;font-size:28px;color:#8C909C;font-family:'Liberation Sans','Noto Sans CJK SC',sans-serif;-webkit-text-stroke-width:0;">毫秒</div>
<div class="t" style="left:718px;top:1443px;height:60px;line-height:60px;font-size:28px;color:#1F2024;font-family:'Liberation Sans','Noto Sans CJK SC',sans-serif;-webkit-text-stroke-width:0;">毫秒</div>
<div class="t" style="left:866px;top:1375px;height:60px;line-height:60px;font-size:33px;color:#000;font-family:'Liberation Sans','Noto Sans CJK SC',sans-serif;-webkit-text-stroke-width:0;">测试 已通过</div>
<div class="t" style="left:1066px;top:1375px;height:60px;line-height:60px;font-size:33px;color:#8C909C;font-family:'Liberation Sans','Noto Sans CJK SC',sans-serif;-webkit-text-stroke-width:0;">共</div>
<div class="t" style="left:1129px;top:1375px;height:60px;line-height:60px;font-size:33px;color:#8C909C;font-family:'Liberation Sans','Noto Sans CJK SC',sans-serif;-webkit-text-stroke-width:0;">个测试</div>
<div class="t" style="left:1309px;top:1375px;height:60px;line-height:60px;font-size:33px;color:#8C909C;font-family:'Liberation Sans','Noto Sans CJK SC',sans-serif;-webkit-text-stroke-width:0;">毫秒</div>
<div class="m" style="left:849px;top:1463.6px;height:52px;line-height:52px;font-size:30px;color:#000;font-family:'Liberation Mono','Noto Sans CJK SC',monospace;-webkit-text-stroke-width:0;">生命周期：</div>
<div class="m" style="left:1017px;top:1463.6px;height:52px;line-height:52px;font-size:30px;color:#000;font-family:'Liberation Mono','Noto Sans CJK SC',monospace;-webkit-text-stroke-width:0;">、创建对象</div>
<div class="t" style="left:2833px;top:1898px;height:60px;line-height:60px;font-size:33px;color:#6C707E;font-family:'Liberation Sans','Noto Sans CJK SC',sans-serif;-webkit-text-stroke-width:0;">个空格</div>
</div></body></html>
